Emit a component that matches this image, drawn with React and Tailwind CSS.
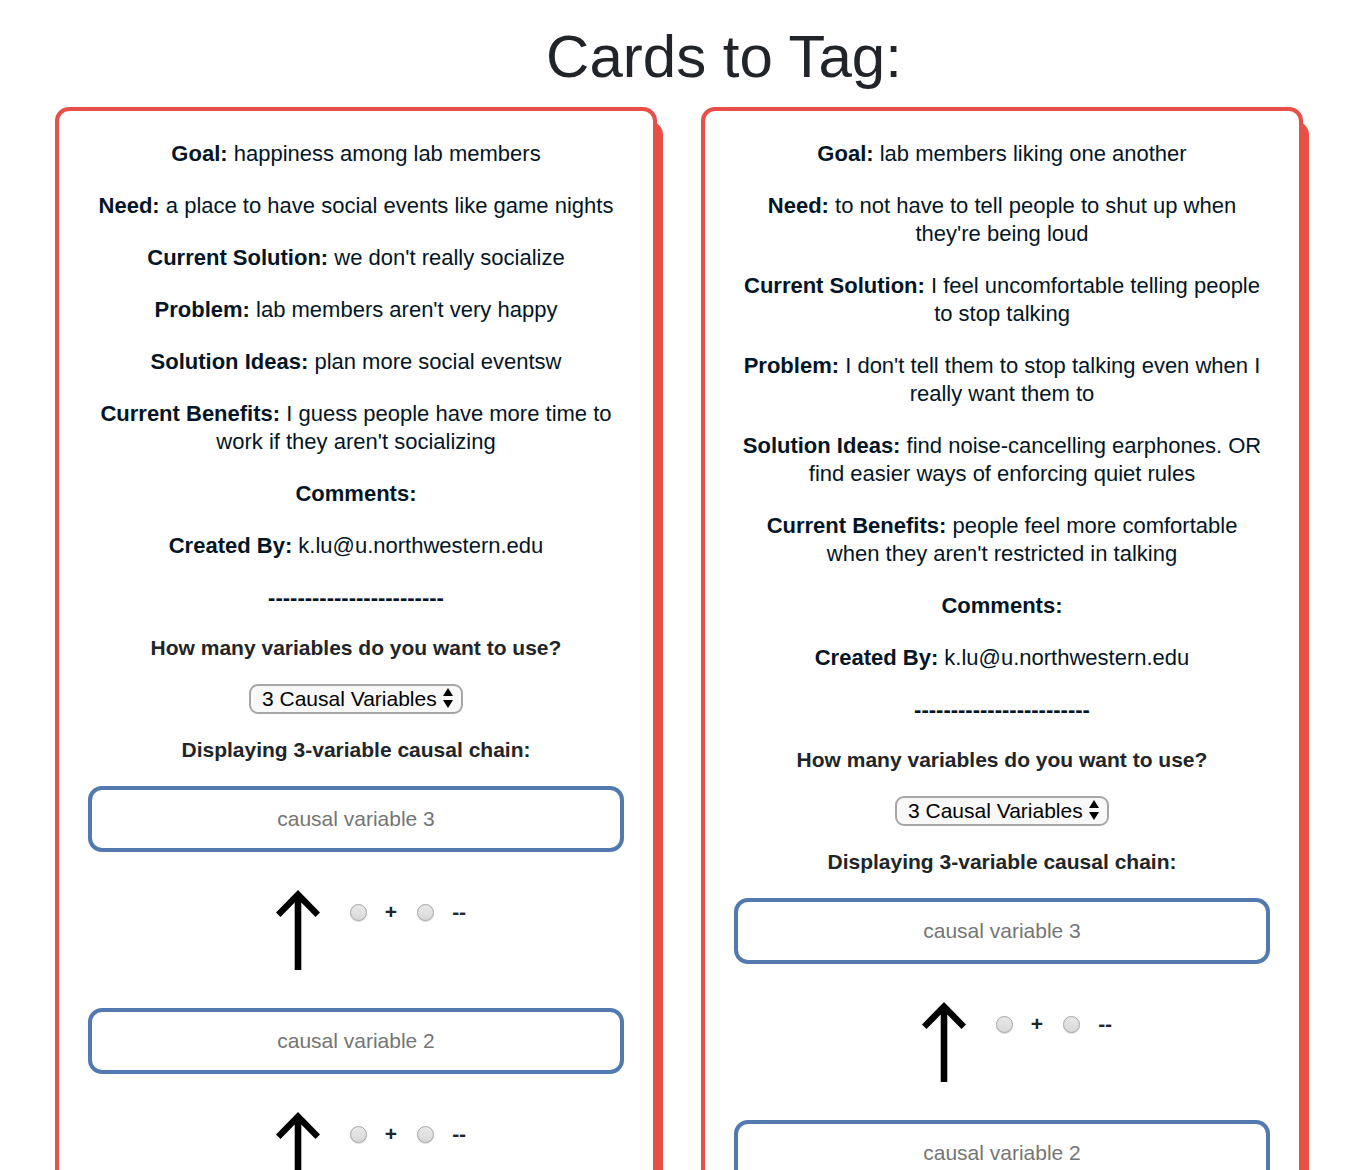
import React from "react";

const CARDS = [
  {
    id: "card-1",
    fields: [
      ["Goal:", "happiness among lab members"],
      ["Need:", "a place to have social events like game nights"],
      ["Current Solution:", "we don't really socialize"],
      ["Problem:", "lab members aren't very happy"],
      ["Solution Ideas:", "plan more social eventsw"],
      ["Current Benefits:", "I guess people have more time to work if they aren't socializing"],
      ["Comments:", ""],
      ["Created By:", "k.lu@u.northwestern.edu"],
    ],
  },
  {
    id: "card-2",
    fields: [
      ["Goal:", "lab members liking one another"],
      ["Need:", "to not have to tell people to shut up when they're being loud"],
      ["Current Solution:", "I feel uncomfortable telling people to stop talking"],
      ["Problem:", "I don't tell them to stop talking even when I really want them to"],
      ["Solution Ideas:", "find noise-cancelling earphones. OR find easier ways of enforcing quiet rules"],
      ["Current Benefits:", "people feel more comfortable when they aren't restricted in talking"],
      ["Comments:", ""],
      ["Created By:", "k.lu@u.northwestern.edu"],
    ],
  },
];

function UpArrow() {
  return (
    <svg width="44" height="80" viewBox="0 0 44 80" aria-hidden="true">
      <path d="M22 0L44 22.5L39.5 27L25.3 12.6V80H18.7V12.6L4.5 27L0 22.5Z" />
    </svg>
  );
}

function Sign({ name, label }) {
  return (
    <label className="flex items-center gap-[18px]">
      <input
        type="radio"
        name={name}
        className="size-[17px] appearance-none rounded-full border border-[#a3a3a3] bg-linear-to-b from-[#e8e8e8] to-[#d9d9d9] shadow-[0_1px_1px_#00000026] checked:bg-[#5279b0]"
      />
      <span className="font-bold">{label}</span>
    </label>
  );
}

function Variable({ cardId, number }) {
  return (
    <>
      <input
        type="text"
        aria-label={`causal variable ${number}`}
        placeholder={`causal variable ${number}`}
        className="block h-[66px] w-full rounded-[14px] border-4 border-[#5279b0] text-center outline-none placeholder:text-[#757575]"
      />
      <div className="flex items-start justify-center py-[38px] pl-[30px]">
        <UpArrow />
        <div className="ml-[30px] flex gap-5 pt-2">
          <Sign name={`${cardId}-sign-${number}`} label="+" />
          <Sign name={`${cardId}-sign-${number}`} label="--" />
        </div>
      </div>
    </>
  );
}

function Card({ id, fields }) {
  return (
    <section className="rounded-[14px] border-4 border-[#e74f47] bg-white p-[29px] text-center shadow-[6px_14px_0_#e74f47]">
      <div className="flex flex-col gap-6 px-2 text-[22px] leading-7 text-[#041527]">
        {fields.map(([name, value]) => (
          <p key={name}>
            <b>{name}</b> {value}
          </p>
        ))}
        <p className="font-bold">------------------------</p>
      </div>
      <label htmlFor={`${id}-count`} className="mt-[22px] block font-bold">
        How many variables do you want to use?
      </label>
      <div className="relative mx-auto mt-[22px] w-fit">
        <select
          id={`${id}-count`}
          className="block h-[30px] w-[214px] appearance-none rounded-[9px] border-2 border-[#a6a6a6] bg-[#f8f8f8] pl-[11px] leading-[26px] text-black"
        >
          <option>3 Causal Variables</option>
        </select>
        <svg
          width="10"
          height="20"
          viewBox="0 0 10 20"
          className="pointer-events-none absolute top-1 right-[10px]"
          aria-hidden="true"
        >
          <path d="M5 0L10 8H0zM5 20L10 12H0z" />
        </svg>
      </div>
      <h2 className="my-[22px] font-bold">Displaying 3-variable causal chain:</h2>
      <Variable cardId={id} number={3} />
      <Variable cardId={id} number={2} />
    </section>
  );
}

export default function App() {
  return (
    <main className="h-screen overflow-hidden bg-white pt-[21px] pr-[61px] pl-[55px] font-['Liberation_Sans',Arial,sans-serif] text-[21px] leading-7 text-[#212529]">
      <h1 className="mb-[14px] pl-[90px] text-center text-[60px] leading-[72px]">Cards to Tag:</h1>
      <div className="grid grid-cols-2 gap-11">
        {CARDS.map((card) => (
          <Card key={card.id} {...card} />
        ))}
      </div>
    </main>
  );
}
